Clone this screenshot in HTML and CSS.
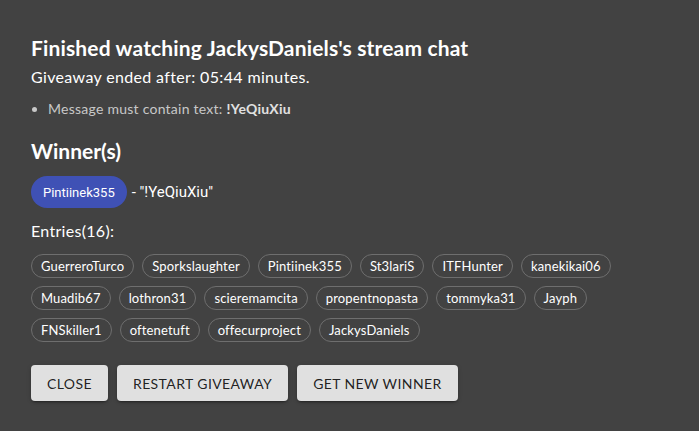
FILE: index.html
```html
<!DOCTYPE html>
<html>
<head>
<meta charset="utf-8">
<link rel="stylesheet" href="styles.css">
</head>
<body>
<div class="dialog">
  <h2 class="title">Finished watching JackysDaniels's stream chat</h2>
  <p class="ended">Giveaway ended after: 05:44 minutes.</p>
  <ul class="rules">
    <li>Message must contain text: <b>!YeQiuXiu</b></li>
  </ul>
  <h3 class="winners">Winner(s)</h3>
  <div class="winner-row">
    <span class="winner-chip">Pintiinek355</span>
    <span class="winner-msg">- "!YeQiuXiu"</span>
  </div>
  <p class="entries-label">Entries(16):</p>
  <div class="entries">
    <span class="chip">GuerreroTurco</span>
    <span class="chip">Sporkslaughter</span>
    <span class="chip">Pintiinek355</span>
    <span class="chip">St3lariS</span>
    <span class="chip">ITFHunter</span>
    <span class="chip">kanekikai06</span>
    <span class="chip">Muadib67</span>
    <span class="chip">lothron31</span>
    <span class="chip">scieremamcita</span>
    <span class="chip">propentnopasta</span>
    <span class="chip">tommyka31</span>
    <span class="chip">Jayph</span>
    <span class="chip">FNSkiller1</span>
    <span class="chip">oftenetuft</span>
    <span class="chip">offecurproject</span>
    <span class="chip">JackysDaniels</span>
  </div>
  <div class="actions">
    <button class="btn">Close</button>
    <button class="btn">Restart giveaway</button>
    <button class="btn">Get new winner</button>
  </div>
</div>
</body>
</html>
```
FILE: styles.css
```css
html, body {
  margin: 0;
  padding: 0;
  background: #424242;
  height: 100%;
}
body {
  font-family: "Lato", "Open Sans", sans-serif;
  color: #fff;
}
.dialog {
  padding: 36px 31px 0 31px;
}
.title {
  margin: 0;
  font-size: 21px;
  letter-spacing: 0.15px;
  font-weight: 700;
  line-height: 24px;
}
.ended {
  margin: 6px 0 0 0;
  font-size: 16px;
  letter-spacing: 0.35px;
  line-height: 22px;
}
.rules {
  margin: 11px 0 0 0;
  padding-left: 17px;
  font-size: 14px;
  letter-spacing: 0.25px;
  line-height: 20px;
  color: #c8c8c8;
}
.rules b {
  color: #e0e0e0;
}
.winners {
  margin: 19px 0 0 0;
  font-size: 21px;
  font-weight: 700;
  line-height: 26px;
}
.winner-row {
  margin-top: 12px;
  display: flex;
  align-items: center;
  gap: 5px;
  font-size: 14px;
}
.winner-chip {
  display: inline-flex;
  align-items: center;
  height: 32px;
  padding: 0 12px;
  border-radius: 16px;
  background: #3f51b5;
  font-family: Roboto, sans-serif;
  font-size: 13px;
}
.winner-msg {
  font-family: Roboto, sans-serif;
  font-size: 15px;
}
.entries-label {
  margin: 12px 0 0 0;
  font-size: 16px;
  letter-spacing: 0.3px;
  line-height: 22px;
}
.entries {
  margin-top: 12px;
  display: flex;
  flex-wrap: wrap;
  gap: 8px;
  width: 600px;
}
.chip {
  display: inline-flex;
  align-items: center;
  height: 24px;
  box-sizing: border-box;
  padding: 0 9px;
  border: 1px solid #6e6e6e;
  border-radius: 12px;
  font-size: 13px;
  letter-spacing: 0.15px;
}
.actions {
  margin-top: 23px;
  display: flex;
  gap: 9px;
}
.btn {
  height: 36px;
  padding: 0 16px;
  border: none;
  border-radius: 4px;
  background: #e0e0e0;
  color: rgba(0,0,0,0.87);
  font-family: "Lato", sans-serif;
  font-size: 14px;
  letter-spacing: 0.4px;
  text-transform: uppercase;
  box-shadow: 0 3px 1px -2px rgba(0,0,0,0.2), 0 2px 2px 0 rgba(0,0,0,0.14), 0 1px 5px 0 rgba(0,0,0,0.12);
}
```
